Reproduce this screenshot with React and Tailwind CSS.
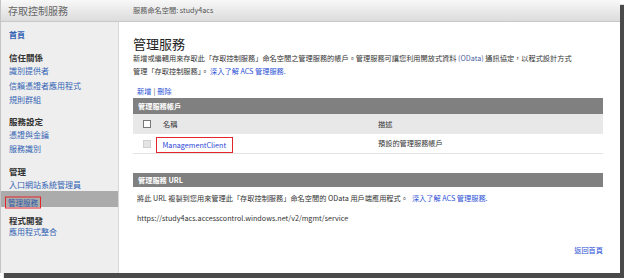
import React from 'react';

const font = "font-['Noto_Sans_CJK_TC','Noto_Sans',sans-serif]";

function SideHeading({ children, className = '' }) {
  return <div className={`h-[14px] flex items-center pl-[8px] text-[8.5px] font-bold text-[#333] ${className}`}>{children}</div>;
}

function SideLink({ children, className = 'h-[14.5px]' }) {
  return <div className={`${className} flex items-center pl-[8px] text-[8px] text-[#3464b4]`}>{children}</div>;
}

function Checkbox({ disabled }) {
  return (
    <div className={`w-[8px] h-[8px] border ${disabled ? 'bg-[#e4e4e4] border-[#d0d0d0]' : 'bg-white border-[#777]'}`} />
  );
}

export default function App() {
  return (
    <div className={`w-[624px] h-[278px] bg-white ${font}`}>
      <div className="w-[620px] h-[273px] border-l border-[#c4c4c4] shadow-[4px_5px_1px_#4a4a4a] flex flex-col overflow-hidden bg-white">
        {/* top bar */}
        <div className="h-[22px] flex items-center bg-gradient-to-b from-[#f8f8f8] to-[#dcdcdc] border-b border-[#c8c8c8] shrink-0">
          <div className="w-[118px] pl-[7px] text-[10px] text-[#666]">存取控制服務</div>
          <div className="pl-[14px] text-[7.2px] text-[#555]">服務命名空間: study4acs</div>
        </div>

        <div className="flex flex-1">
          {/* side nav */}
          <div className="w-[118px] shrink-0 bg-[#eeeeee] border-r border-[#d6d6d6] pt-[6px]">
            <div className="h-[14px] flex items-center pl-[8px] text-[8px] font-bold text-[#3464b4]">首頁</div>

            <SideHeading className="mt-[8px]">信任關係</SideHeading>
            <SideLink>識別提供者</SideLink>
            <SideLink>信賴憑證者應用程式</SideLink>
            <SideLink>規則群組</SideLink>

            <SideHeading className="mt-[7px]">服務設定</SideHeading>
            <SideLink className="h-[13.5px]">憑證與金鑰</SideLink>
            <SideLink className="h-[14.5px]">服務識別</SideLink>

            <SideHeading className="mt-[8px] h-[13px]">管理</SideHeading>
            <SideLink className="h-[12px]">入口網站系統管理員</SideLink>
            <div className="h-[16px] mt-[0.5px] bg-[#ababab] flex items-end pl-[4px]">
              <span className="h-[12px] translate-y-[1.5px] flex items-center border-[1.5px] border-[#e4262c] px-[2px] text-[7.5px] text-[#2f5aa8]">管理服務</span>
            </div>

            <SideHeading className="mt-[6px]">程式開發</SideHeading>
            <SideLink className="h-[10px]">應用程式整合</SideLink>
          </div>

          {/* main */}
          <div className="flex-1 pl-[14px] pr-[17px] pt-[13px] text-[#333]">
            <div className="h-[16px] flex items-center text-[13px] text-[#222] leading-none">管理服務</div>
            <div className="mt-[1px] text-[7.2px] leading-[13px] whitespace-nowrap">
              新增或編輯用來存取此「存取控制服務」命名空間之管理服務的帳戶。管理服務可讓您利用開放式資料 <span className="text-[#4a62a0]">(OData)</span> 通訊協定，以程式設計方式
              <br />
              管理「存取控制服務」。 <span className="text-[#2a4fd6]">深入了解 ACS 管理服務.</span>
            </div>

            <div className="mt-[7px] h-[12px] flex items-center pl-[4px] text-[7.2px] text-[#2a4fd6]">
              新增 <span className="text-[#555] mx-[2px]">|</span> 刪除
            </div>

            {/* accounts table */}
            <div className="mt-[1px] h-[16px] bg-[#808080] flex items-center pl-[5px] text-[7.2px] font-bold text-white">管理服務帳戶</div>
            <div className="h-[20px] bg-[#e8e8e8] flex items-center text-[7.2px] text-[#333]">
              <div className="w-[23px] pl-[10px]"><Checkbox /></div>
              <div className="w-[222px] pl-[7px]">名稱</div>
              <div>描述</div>
            </div>
            <div className="h-[20px] border-b border-[#e4e4e4] flex items-center text-[7.2px]">
              <div className="w-[23px] pl-[10px]"><Checkbox disabled /></div>
              <div className="w-[222px] self-end">
                <span className="inline-flex h-[16px] items-center border-[1.5px] border-[#e4262c] px-[5.5px] text-[#2a3fd6]">ManagementClient</span>
              </div>
              <div className="text-[#333]">預設的管理服務帳戶</div>
            </div>

            {/* url section */}
            <div className="mt-[19px] h-[14px] bg-[#808080] flex items-center pl-[5px] text-[7.2px] font-bold text-white">管理服務 URL</div>
            <div className="mt-[5px] h-[12px] flex items-center pl-[4px] text-[7.2px] whitespace-nowrap">
              將此 URL 複製到您用來管理此「存取控制服務」命名空間的 OData 用戶端應用程式。
              <span className="ml-[4px] text-[#2a4fd6]">深入了解 ACS 管理服務.</span>
            </div>
            <div className="mt-[8px] h-[12px] flex items-center pl-[4px] text-[7.2px] text-[#333]">
              https://study4acs.accesscontrol.windows.net/v2/mgmt/service
            </div>

            <div className="mt-[20px] h-[12px] flex items-center justify-end text-[7.2px] text-[#2a4fd6]">返回首頁</div>
          </div>
        </div>
      </div>
    </div>
  );
}
